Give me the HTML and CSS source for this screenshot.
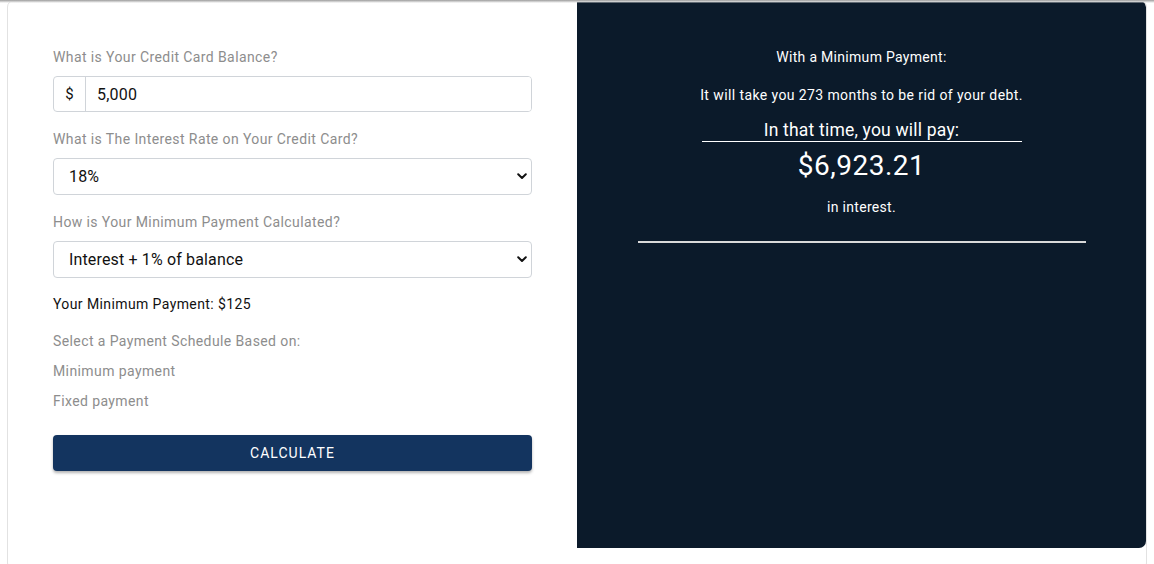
FILE: index.html
```html
<!DOCTYPE html>
<html lang="en">
<head>
<meta charset="utf-8">
<title>Credit Card Payoff Calculator</title>
<link rel="stylesheet" href="styles.css">
</head>
<body>
<div class="top-shade"></div>
<div class="card">
  <div class="form-col">
    <div class="label first">What is Your Credit Card Balance?</div>
    <div class="input-group">
      <span class="addon">$</span>
      <input class="amount" type="text" value="5,000">
    </div>
    <div class="label">What is The Interest Rate on Your Credit Card?</div>
    <div class="select-wrap">
      <select class="select"><option>18%</option></select>
      <svg class="chev" width="10" height="7" viewBox="0 0 10 7"><path d="M1.2 1.3 L5 5 L8.8 1.3" fill="none" stroke="#111" stroke-width="2" stroke-linecap="round" stroke-linejoin="round"/></svg>
    </div>
    <div class="label">How is Your Minimum Payment Calculated?</div>
    <div class="select-wrap">
      <select class="select"><option>Interest + 1% of balance</option></select>
      <svg class="chev" width="10" height="7" viewBox="0 0 10 7"><path d="M1.2 1.3 L5 5 L8.8 1.3" fill="none" stroke="#111" stroke-width="2" stroke-linecap="round" stroke-linejoin="round"/></svg>
    </div>
    <div class="min-pay">Your Minimum Payment: $125</div>
    <div class="label schedule">Select a Payment Schedule Based on:</div>
    <div class="label option">Minimum payment</div>
    <div class="label option">Fixed payment</div>
    <button class="calc">CALCULATE</button>
  </div>
  <div class="result">
    <div class="r-title">With a Minimum Payment:</div>
    <div class="r-months">It will take you 273 months to be rid of your debt.</div>
    <div class="r-pay">In that time, you will pay:</div>
    <div class="r-amount">$6,923.21</div>
    <div class="r-interest">in interest.</div>
    <div class="r-rule"></div>
  </div>
</div>
</body>
</html>
```

FILE: styles.css
```css
html, body {
  margin: 0;
  padding: 0;
  background: #ffffff;
  font-family: Roboto, "Liberation Sans", Arial, sans-serif;
  overflow: hidden;
}

.top-shade {
  position: absolute;
  left: 0;
  top: 0;
  width: 100%;
  height: 3px;
  background: linear-gradient(#9c9c9c, #d8d8d8 60%, rgba(255,255,255,0));
  z-index: 2;
}

.card {
  margin-left: 7px;
  width: 1140px;
  height: 570px;
  border: 1px solid #e2e2e2;
  border-radius: 7px;
  box-sizing: border-box;
  display: flex;
  align-items: flex-start;
  overflow: hidden;
}

.form-col {
  width: 569px;
  box-sizing: border-box;
  padding: 46px 45px 0 45px;
  display: flex;
  flex-direction: column;
}

.label {
  font-size: 14px;
  line-height: 20px;
  letter-spacing: 0.4px;
  color: #8d8d8d;
  margin-top: 17px;
  margin-bottom: 9px;
}

.label.first {
  margin-top: 0;
}

.input-group {
  display: flex;
  height: 36px;
  border: 1px solid #d0d4d9;
  border-radius: 4px;
  box-sizing: border-box;
  overflow: hidden;
}

.addon {
  width: 31px;
  flex: none;
  border-right: 1px solid #d0d4d9;
  display: flex;
  align-items: center;
  justify-content: center;
  font-size: 15px;
  color: #111;
}

.amount {
  flex: 1;
  border: none;
  outline: none;
  padding: 0 0 0 11px;
  font-family: inherit;
  font-size: 16px;
  letter-spacing: 0.2px;
  color: #111;
  background: #fff;
}

.select-wrap {
  position: relative;
}

.select {
  -webkit-appearance: none;
  appearance: none;
  width: 100%;
  height: 37px;
  border: 1px solid #d0d4d9;
  border-radius: 4px;
  background: #fff;
  padding: 0 0 0 15px;
  font-family: inherit;
  font-size: 16px;
  letter-spacing: 0.15px;
  color: #111;
  box-sizing: border-box;
}

.chev {
  position: absolute;
  right: 5px;
  top: 15px;
  pointer-events: none;
}

.min-pay {
  font-size: 14px;
  line-height: 20px;
  letter-spacing: 0.4px;
  color: #111;
  margin-top: 16px;
}

.label.schedule {
  margin-top: 17px;
  margin-bottom: 0;
}

.label.option {
  margin-top: 10px;
  margin-bottom: 0;
}

.calc {
  margin-top: 24px;
  height: 36px;
  width: 100%;
  border: none;
  border-radius: 4px;
  background: #13345f;
  color: #ffffff;
  font-family: inherit;
  font-size: 14px;
  font-weight: 400;
  letter-spacing: 1px;
  box-shadow: 0 2px 3px rgba(0,0,0,0.3);
}

.result {
  flex: 1;
  background: #0b1a2a;
  height: 548px;
  margin-top: -1px;
  border-top-right-radius: 7px;
  border-bottom-right-radius: 7px;
  color: #ffffff;
  display: flex;
  flex-direction: column;
  align-items: center;
  padding-top: 47px;
  box-sizing: border-box;
}

.r-title {
  font-size: 14px;
  line-height: 20px;
  letter-spacing: 0.3px;
  font-weight: 400;
}

.r-months {
  font-size: 14px;
  line-height: 20px;
  letter-spacing: 0.4px;
  margin-top: 18px;
}

.r-pay {
  width: 320px;
  text-align: center;
  font-size: 17.5px;
  line-height: 22px;
  letter-spacing: 0.2px;
  margin-top: 14px;
  border-bottom: 1px solid #ffffff;
}

.r-amount {
  font-size: 28px;
  line-height: 34px;
  letter-spacing: 0.5px;
  margin-top: 7px;
}

.r-interest {
  font-size: 14px;
  line-height: 20px;
  letter-spacing: 0.3px;
  margin-top: 14px;
}

.r-rule {
  width: 448px;
  height: 0;
  border-top: 2px solid #d9d9d9;
  margin-top: 24px;
}
```
